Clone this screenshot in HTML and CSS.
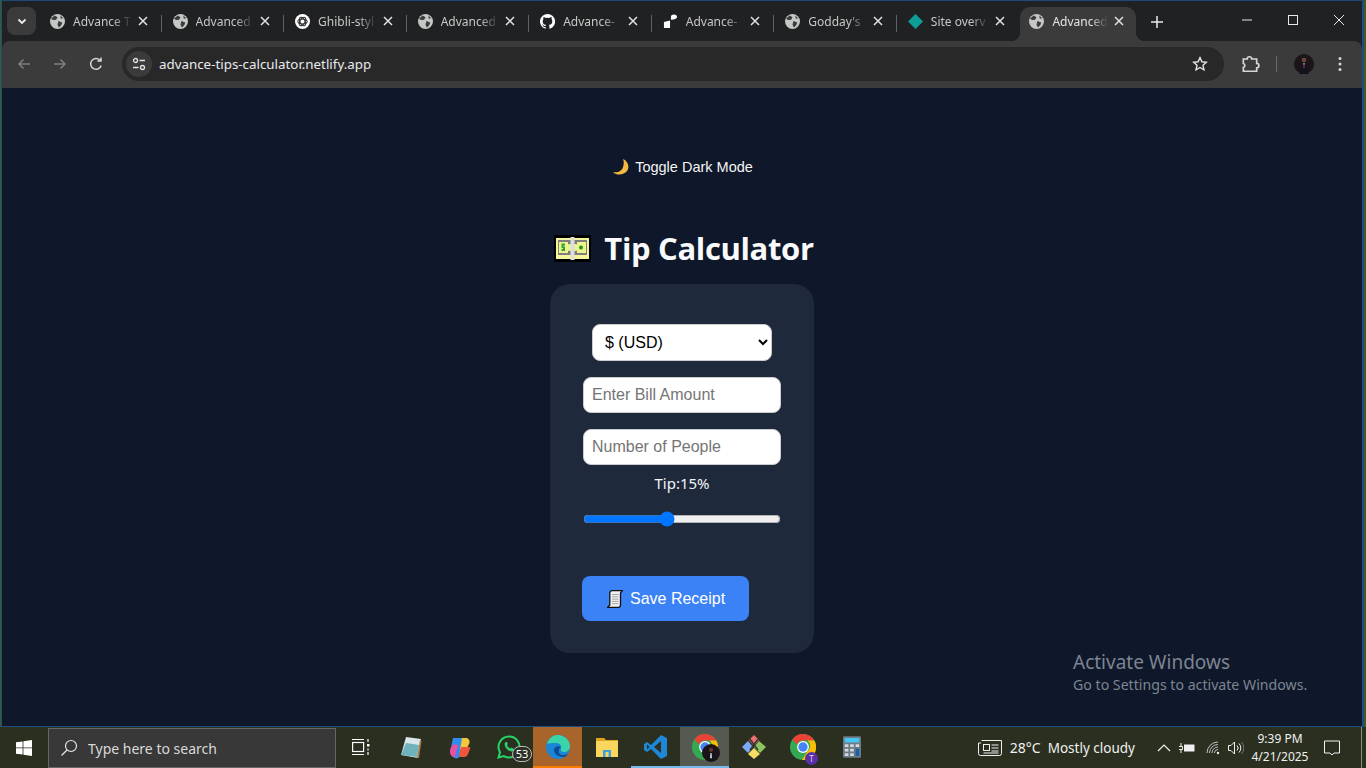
FILE: index.html
```html
<!DOCTYPE html>
<html lang="en">
<head>
    <meta charset="UTF-8">
    <title>Tip Calculator</title>
    <link rel="stylesheet" href="styles.css">
</head>
<body>
    <div class="window">
        <!-- tab strip -->
        <div class="tabstrip">
            <button class="tabsearch" type="button">
                <svg width="12" height="12" viewBox="0 0 12 12"><path d="M2.5 4.5 6 8l3.5-3.5" fill="none" stroke="#e8eaed" stroke-width="1.8"/></svg>
            </button>
            <div class="tabs">
                <div class="tab">
                    <svg class="fav" viewBox="0 0 16 16"><use href="#globe"/></svg>
                    <span class="tab-label">Advance T</span>
                    <svg class="tab-close" viewBox="0 0 10 10"><use href="#close"/></svg>
                </div>
                <div class="tab">
                    <svg class="fav" viewBox="0 0 16 16"><use href="#globe"/></svg>
                    <span class="tab-label">Advanced</span>
                    <svg class="tab-close" viewBox="0 0 10 10"><use href="#close"/></svg>
                </div>
                <div class="tab">
                    <svg class="fav" viewBox="0 0 16 16">
                        <circle cx="8" cy="8" r="8" fill="#fff"/>
                        <g fill="none" stroke="#333" stroke-width="1.1">
                            <ellipse cx="8" cy="8" rx="5" ry="2.6"/>
                            <ellipse cx="8" cy="8" rx="5" ry="2.6" transform="rotate(60 8 8)"/>
                            <ellipse cx="8" cy="8" rx="5" ry="2.6" transform="rotate(120 8 8)"/>
                        </g>
                    </svg>
                    <span class="tab-label">Ghibli-styl</span>
                    <svg class="tab-close" viewBox="0 0 10 10"><use href="#close"/></svg>
                </div>
                <div class="tab">
                    <svg class="fav" viewBox="0 0 16 16"><use href="#globe"/></svg>
                    <span class="tab-label">Advanced</span>
                    <svg class="tab-close" viewBox="0 0 10 10"><use href="#close"/></svg>
                </div>
                <div class="tab">
                    <svg class="fav" viewBox="0 0 16 16"><path fill="#fff" d="M8 0a8 8 0 0 0-2.53 15.59c.4.07.55-.17.55-.38v-1.34c-2.22.48-2.69-1.07-2.69-1.07-.36-.92-.89-1.17-.89-1.17-.73-.5.05-.49.05-.49.8.06 1.23.82 1.23.82.71 1.22 1.87.87 2.33.66.07-.52.28-.87.5-1.07-1.77-.2-3.64-.89-3.64-3.95 0-.87.31-1.59.82-2.15-.08-.2-.36-1.02.08-2.12 0 0 .67-.21 2.2.82a7.6 7.6 0 0 1 4 0c1.53-1.04 2.2-.82 2.2-.82.44 1.1.16 1.92.08 2.12.51.56.82 1.27.82 2.15 0 3.07-1.87 3.75-3.65 3.95.29.25.54.73.54 1.48v2.2c0 .21.15.46.55.38A8 8 0 0 0 8 0z"/></svg>
                    <span class="tab-label">Advance-</span>
                    <svg class="tab-close" viewBox="0 0 10 10"><use href="#close"/></svg>
                </div>
                <div class="tab">
                    <svg class="fav" viewBox="0 0 16 16"><path fill="#fff" d="M1 8.500 7.500 7v8H1zM8.500 6V2.500C8.500 1.500 10 .5 12 .5c1.500 0 3 1 3 2.500 0 2-2 3-6.500 3z"/></svg>
                    <span class="tab-label">Advance-</span>
                    <svg class="tab-close" viewBox="0 0 10 10"><use href="#close"/></svg>
                </div>
                <div class="tab">
                    <svg class="fav" viewBox="0 0 16 16"><use href="#globe"/></svg>
                    <span class="tab-label">Godday's</span>
                    <svg class="tab-close" viewBox="0 0 10 10"><use href="#close"/></svg>
                </div>
                <div class="tab">
                    <svg class="fav" viewBox="0 0 16 16"><path fill="#0e9e97" d="M8 0l8 8-8 8-8-8z"/></svg>
                    <span class="tab-label">Site overv</span>
                    <svg class="tab-close" viewBox="0 0 10 10"><use href="#close"/></svg>
                </div>
                <div class="tab tab-active">
                    <svg class="fav" viewBox="0 0 16 16"><use href="#globe"/></svg>
                    <span class="tab-label">Advanced</span>
                    <svg class="tab-close" viewBox="0 0 10 10"><use href="#close"/></svg>
                </div>
            </div>
            <span class="newtab">
                <svg width="12" height="12" viewBox="0 0 12 12"><path d="M6 0v12M0 6h12" stroke="#e8eaed" stroke-width="1.5"/></svg>
            </span>
            <div class="winctrl">
                <svg width="46" height="12" viewBox="0 0 46 12"><path d="M18 6h10" stroke="#e8e8e8"/></svg>
                <svg width="46" height="12" viewBox="0 0 46 12"><rect x="18.5" y="1.5" width="9" height="9" fill="none" stroke="#e8e8e8"/></svg>
                <svg width="46" height="12" viewBox="0 0 46 12"><path d="M18 1l10 10M28 1 18 11" stroke="#e8e8e8"/></svg>
            </div>
        </div>

        <!-- toolbar -->
        <div class="toolbar">
            <svg class="tool" viewBox="0 0 16 16"><path d="M14 8H3M7.5 3.5 3 8l4.5 4.5" fill="none" stroke="#7d7f81" stroke-width="1.5"/></svg>
            <svg class="tool" viewBox="0 0 16 16"><path d="M2 8h11M8.5 3.5 13 8l-4.500 4.500" fill="none" stroke="#7d7f81" stroke-width="1.5"/></svg>
            <svg class="tool" viewBox="0 0 16 16"><path d="M13.200 9.500A5.400 5.400 0 1 1 12 4.200M13 1.500v3.600H9.400" fill="none" stroke="#d5d7d9" stroke-width="1.500"/></svg>
            <div class="omnibox">
                <span class="siteinfo">
                    <svg width="16" height="16" viewBox="0 0 16 16" fill="none" stroke="#e3e3e3" stroke-width="1.300"><circle cx="4.500" cy="4.500" r="2"/><path d="M8.500 4.500H14M2 11.500h5.500"/><circle cx="11.500" cy="11.500" r="2"/></svg>
                </span>
                <span class="url">advance-tips-calculator.netlify.app</span>
                <svg class="star" viewBox="0 0 16 16"><path d="M8 1.600l1.900 4.200 4.500.5-3.400 3 1 4.500L8 11.500l-4 2.300 1-4.500-3.400-3 4.500-.5z" fill="none" stroke="#e3e3e3" stroke-width="1.400"/></svg>
            </div>
            <svg class="ext" viewBox="0 0 18 18"><path d="M3 4.500h3.500a2 2 0 0 1 4 0H15v4a2 2 0 0 1 0 4v3H3v-3.500a1.800 1.800 0 0 0 0-3.500z" fill="none" stroke="#d5d7d9" stroke-width="1.500"/></svg>
            <span class="toolsep"></span>
            <svg class="avatar" viewBox="0 0 20 20">
                <circle cx="10" cy="10" r="10" fill="#1c1418"/>
                <circle cx="10" cy="6" r="2.300" fill="#6b463a"/>
                <path d="M5.500 20v-7.500c0-2 2-3.500 4.500-3.500s4.500 1.500 4.500 3.500V20z" fill="#12131c"/>
                <path d="M9.200 9.200h1.600L10 12z" fill="#d8d8d8"/>
                <path d="M9.700 10.500h.6l.3 3-.6 1-.6-1z" fill="#a52a34"/>
            </svg>
            <svg class="dots" viewBox="0 0 4 16"><circle cx="2" cy="2.500" r="1.500" fill="#d5d7d9"/><circle cx="2" cy="8" r="1.500" fill="#d5d7d9"/><circle cx="2" cy="13.500" r="1.500" fill="#d5d7d9"/></svg>
        </div>

        <!-- the calculator page -->
        <main class="page">
            <button class="dark-toggle" type="button">
                <svg class="emoji-moon" viewBox="0 0 16 16"><path d="M10 0C15 2 17 8 14 12 11 16 4 17 0 13 5 14 9 12 10 8 11 5 11 2 10 0z" fill="#f4b93e"/></svg>
                Toggle Dark Mode
            </button>
            <h1 class="title">
                <svg class="emoji-money" viewBox="0 0 37 27">
                    <rect width="37" height="27" fill="#000"/>
                    <rect x="2" y="3" width="33" height="21" fill="#f5f59c"/>
                    <rect x="4" y="5" width="29" height="15" fill="#7f7f7f"/>
                    <rect x="5" y="7" width="9" height="11" fill="#ecf58e"/>
                    <rect x="23" y="7" width="9" height="11" fill="#ecf58e"/>
                    <circle cx="16" cy="12.500" r="3.500" fill="#ecf58e"/>
                    <circle cx="21" cy="12.500" r="3.500" fill="#ecf58e"/>
                    <rect x="16.500" y="2" width="4" height="23" fill="#dedede"/>
                    <path d="M7.500 8.500h3.500v2H9.500v1H11v4.500H7.500v-2H9v-1H7.500z" fill="#2aa82a"/>
                    <circle cx="27" cy="12.500" r="2" fill="#1f9a1f"/>
                </svg>
                Tip Calculator
            </h1>
            <section class="card">
                <select class="currency">
                    <option>$ (USD)</option>
                    <option>€ (EUR)</option>
                    <option>£ (GBP)</option>
                </select>
                <input class="field" type="number" placeholder="Enter Bill Amount">
                <input class="field" type="number" placeholder="Number of People">
                <p class="tip-label">Tip:15%</p>
                <input class="slider" type="range" min="0" max="36" value="15">
                <button class="save" type="button">
                    <svg class="emoji-scroll" viewBox="0 0 16 18">
                        <path d="M5 .7h10.300L13.500 3v12c0 1.300-1 2.300-2.200 2.300H.7L2.800 15V3C2.800 1.700 3.800.7 5 .7z" fill="#f1f1f1" stroke="#111" stroke-width="1.300"/>
                        <path d="M5 4.500h6.500M5 6.800h6.500M5 9.100h6.500M5 11.400h6.500M5 13.700h6.500" stroke="#a5a5a5"/>
                    </svg>
                    Save Receipt
                </button>
            </section>
            <div class="activate">
                <div class="activate-head">Activate Windows</div>
                <div>Go to Settings to activate Windows.</div>
            </div>
        </main>
    </div>

    <!-- windows taskbar -->
    <footer class="taskbar">
        <span class="start">
            <svg width="16" height="16" viewBox="0 0 16 16"><path fill="#fff" d="M0 2.300 6.600 1.400V7.500H0zM7.400 1.300 16 0v7.500H7.400zM0 8.300h6.600v6.300L0 13.700zM7.400 8.300H16V16l-8.600-1.300z"/></svg>
        </span>
        <div class="search">
            <svg width="18" height="18" viewBox="0 0 18 18"><circle cx="11" cy="7" r="5.500" fill="none" stroke="#e6e6e6" stroke-width="1.200"/><path d="M7 11 1.500 16.500" stroke="#e6e6e6" stroke-width="1.200"/></svg>
            <span>Type here to search</span>
        </div>
        <span class="app app-first">
            <svg width="18" height="18" viewBox="0 0 18 18" fill="none" stroke="#fff" stroke-width="1.200"><path d="M0 1.500h12M0 16.500h12"/><rect x=".6" y="4.500" width="11" height="9"/><path d="M16 1v3M16 14v3"/><rect x="15" y="6" width="2.500" height="2.500" fill="#fff" stroke="none"/><path d="M16 10.500v2"/></svg>
        </span>
        <span class="app">
            <svg width="24" height="24" viewBox="0 0 24 24"><path d="M7 2l15 2-3 19-17-3z" fill="#d9e6ea"/><path d="M7 8l13 2-2 12-16-2z" fill="#6fb3bd"/><path d="M21 5l1.500 1-2.500 17-2 0z" fill="#a5794a"/></svg>
        </span>
        <span class="app">
            <svg width="24" height="24" viewBox="0 0 24 24"><path d="M5 3h9c2 0 3 1 4 3l-6 15c-1 2-3 3-5 2-3-1-4-3-5-6z" fill="#2f8df0"/><path d="M14 3h4c2 0 4 2 3.500 5L18 15h-6z" fill="#f7c73b"/><path d="M2 17c0-4 2-7 5-8l3 1-3 12c-2 1-5-2-5-5z" fill="#e84fa0"/><path d="M11 20l2-8h8c1 0 1.500 1 1 2l-2 5c-.5 2-2 3-4 3h-4z" fill="#f0563c"/></svg>
        </span>
        <span class="app app-badged">
            <svg width="24" height="24" viewBox="0 0 24 24"><path d="M12 1.500a10.500 10.500 0 0 0-9 15.800L1.500 22.500l5.400-1.400A10.500 10.500 0 1 0 12 1.500z" fill="none" stroke="#25d366" stroke-width="2"/><path d="M8.500 7c-1.500 1.500-1 4 1 6.500s4.500 3.500 6.500 2.500l1-2-2.500-1.500-1 1c-1.500-.5-3-2-3.500-3.500l1-1L9.800 7z" fill="#25d366"/></svg>
            <span class="badge">53</span>
        </span>
        <span class="app app-edge">
            <svg width="26" height="26" viewBox="0 0 26 26"><circle cx="13" cy="13" r="12" fill="#1b86d8"/><path d="M2 10C4 3 9 1 13 1c6 0 12 5 12 11 0 4-3 6-6 6-2 0-4-1-3-3 1-3-1-6-5-6-4 0-7 0-9 1z" fill="#3bd3a8"/><path d="M9 16c0 4 4 7 9 7 2 0 4-1 5-3-3 1-8 2-9-1-1-2 0-5 2-6-3-2-7 0-7 3z" fill="#0d4c93"/></svg>
        </span>
        <span class="app">
            <svg width="22" height="20" viewBox="0 0 22 20"><path d="M0 1h8l2 2h12v3H0z" fill="#e0a422"/><rect y="4" width="22" height="16" fill="#f9d75f"/><path d="M7 13h8v7H7z" fill="#3f9fe0"/><rect x="9.500" y="15" width="3" height="5" fill="#f9d75f"/></svg>
        </span>
        <span class="app app-open">
            <svg width="24" height="24" viewBox="0 0 24 24"><path d="M17 0l6 3v18l-6 3L7 14l-4 3-3-2V9l3-2 4 3z" fill="#1e88d6"/><path d="M17 6v12l-7-6z" fill="#2b2f23"/><path d="M3 9.500v5L5.500 12z" fill="#2b2f23"/></svg>
        </span>
        <span class="app app-active">
            <svg width="26" height="26" viewBox="0 0 24 24"><use href="#chrome"/></svg>
            <svg class="app-avatar" viewBox="0 0 20 20"><circle cx="10" cy="10" r="10" fill="#1c1418"/><circle cx="10" cy="6.500" r="2.400" fill="#5a3a32"/><path d="M5.500 19v-6.500c0-2 2-3 4.500-3s4.500 1 4.500 3V19z" fill="#12131c"/><path d="M9.300 10h1.400l.3 5-1 1.500-1-1.500z" fill="#ddd"/></svg>
        </span>
        <span class="app">
            <svg width="26" height="26" viewBox="0 0 26 26"><path d="M13 1l5 5-5 6-5-6z" fill="#ee7070"/><path d="M18 7l7 6-6 6-6-6z" fill="#8ec45f"/><path d="M13 14l6 6-6 5-6-5z" fill="#f7dd63"/><path d="M7 7l5 6-5 6-6-6z" fill="#7daaf5"/><path d="M9 5l8 11M17 5 9 16" stroke="#333" stroke-width="1.300"/></svg>
        </span>
        <span class="app">
            <svg width="26" height="26" viewBox="0 0 24 24"><use href="#chrome"/></svg>
            <span class="app-dot">T</span>
        </span>
        <span class="app">
            <svg width="18" height="24" viewBox="0 0 20 24"><rect width="20" height="24" rx="1.500" fill="#6d7b87"/><rect x="2" y="2" width="16" height="5" fill="#45c8f0"/><g fill="#d5dbe0"><rect x="2" y="9" width="4" height="3"/><rect x="8" y="9" width="4" height="3"/><rect x="2" y="14" width="4" height="3"/><rect x="8" y="14" width="4" height="3"/><rect x="2" y="19" width="4" height="3"/><rect x="8" y="19" width="4" height="3"/></g><rect x="14" y="14" width="4" height="8" fill="#1b5fa8"/><rect x="14" y="9" width="4" height="3" fill="#d5dbe0"/></svg>
        </span>

        <div class="tray">
            <svg class="news" width="24" height="16" viewBox="0 0 24 16" fill="none" stroke="#f0f0f0"><path d="M3.500.5h20v13a2 2 0 0 1-2 2h-19a2 2 0 0 1-2-2V3h2.500"/><rect x="5.500" y="4.500" width="6" height="6"/><path d="M13.500 5h7M13.500 8h7M13.500 11h7M5.500 13h15"/></svg>
            <span class="temp">28°C</span>
            <span class="weather">Mostly cloudy</span>
            <svg class="chev" width="14" height="8" viewBox="0 0 14 8"><path d="M1 7l6-6 6 6" fill="none" stroke="#f0f0f0" stroke-width="1.200"/></svg>
            <svg class="batt" width="16" height="10" viewBox="0 0 16 10"><rect x="5" y="1.500" width="10.500" height="7" fill="#f0f0f0"/><path d="M0 3.500h3.500v3H0M2 0v3M2 7v3" fill="none" stroke="#f0f0f0"/></svg>
            <svg class="wifi" width="14" height="14" viewBox="0 0 14 14" fill="none" stroke="#bdbdbd"><path d="M1 12a11 11 0 0 1 11-11M3.500 12A8.500 8.500 0 0 1 12 3.500M6 12a6 6 0 0 1 6-6M8.500 12A3.500 3.500 0 0 1 12 8.500"/><circle cx="12" cy="12" r="1.200" fill="#f0f0f0" stroke="none"/></svg>
            <svg class="sound" width="16" height="14" viewBox="0 0 16 14" fill="none" stroke="#f0f0f0"><path d="M.5 4.500H3L6.500 1v12L3 9.500H.5z"/><path d="M9 4.500a3.500 3.500 0 0 1 0 5M11 2.500a6.500 6.500 0 0 1 0 9"/><path d="M13.500 1a9 9 0 0 1 0 12" stroke="#777"/></svg>
            <div class="clock">
                <div>9:39 PM</div>
                <div>4/21/2025</div>
            </div>
            <svg class="notif" width="16" height="16" viewBox="0 0 16 16"><path d="M.5 1h15v12H10l-2 2-2-2H.5z" fill="none" stroke="#f0f0f0"/></svg>
            <span class="showdesk"></span>
        </div>
    </footer>

    <!-- shared icons -->
    <svg class="defs" width="0" height="0">
        <defs>
            <g id="globe">
                <circle cx="8" cy="8" r="8" fill="#c4c7c5"/>
                <path d="M5 1.500 8 3.500 6.500 6 3.500 6.500 1 5zM9 7.500l4 1.500-1 3-2.500 2.500L8 11.500zM11 1.500l3 3-2.500.5z" fill="#3b3b3b"/>
            </g>
            <path id="close" d="M1 1l8 8M9 1 1 9" stroke="#e3e3e3" stroke-width="1.500" fill="none"/>
            <g id="chrome">
                <circle cx="12" cy="12" r="12" fill="#34a853"/>
                <path d="M12 0a12 12 0 0 1 10.400 6H12a6 6 0 0 0-5.600 3.800L2.300 5A12 12 0 0 1 12 0z" fill="#ea4335"/>
                <path d="M22.400 6A12 12 0 0 1 11 24l5.200-8.200A6 6 0 0 0 16 6z" fill="#fbbc04"/>
                <circle cx="12" cy="12" r="5.500" fill="#fff"/>
                <circle cx="12" cy="12" r="4.300" fill="#4285f4"/>
            </g>
        </defs>
    </svg>
</body>
</html>
```

FILE: styles.css
```css
* {
    box-sizing: border-box;
}
html, body {
    margin: 0;
    height: 768px;
    overflow: hidden;
}
body {
    background: #3f5a25;
    font-family: "Liberation Sans", Arial, sans-serif;
    display: flex;
    flex-direction: column;
}
button {
    font-family: inherit;
    cursor: pointer;
}
.defs {
    display: block;
    height: 0;
}

/* browser window */
.window {
    width: 1363px;
    height: 727px;
    margin-left: 1px;
    padding-top: 1px;
    background: #202122;
    border: 1px solid #1c4f80;
    border-right-width: 2px;
    border-top-color: #1c4a74;
    display: flex;
    flex-direction: column;
    flex-shrink: 0;
}
.tabstrip {
    height: 39px;
    flex-shrink: 0;
    display: flex;
    align-items: flex-end;
    background: #202122;
}
.tabsearch {
    width: 29px;
    height: 28px;
    margin: 0 3px 6px 5px;
    border: none;
    border-radius: 8px;
    background: #3b3b3b;
    display: flex;
    align-items: center;
    justify-content: center;
    padding: 0;
}
.tabs {
    display: flex;
    height: 34px;
}
.tab {
    width: 122.550px;
    height: 34px;
    padding: 0 11px 6px 11px;
    display: flex;
    align-items: center;
    position: relative;
    color: #c7c7c7;
    font: 12px "Noto Sans", sans-serif;
}
.tab::after {
    content: "";
    position: absolute;
    right: 0;
    top: 8px;
    height: 17px;
    width: 1px;
    background: #5f6368;
}
.tab:nth-child(8)::after {
    display: none;
}
.tab-active {
    width: 116px;
    margin-left: 1px;
    padding: 0 9px 6px 9px;
    background: #3b3b3b;
    border-radius: 10px 10px 0 0;
    color: #e3e3e3;
}
/* the little curves where the active tab meets the toolbar */
.tab-active::before, .tab-active::after {
    content: "";
    position: absolute;
    top: auto;
    bottom: 0;
    width: 9px;
    height: 9px;
}
.tab-active::before {
    left: -9px;
    background: radial-gradient(circle at 0 0, transparent 9px, #3b3b3b 9.500px);
}
.tab-active::after {
    right: -9px;
    background: radial-gradient(circle at 100% 0, transparent 9px, #3b3b3b 9.500px);
}
.fav {
    width: 15px;
    height: 15px;
    flex-shrink: 0;
    margin-right: 8px;
}
.tab-label {
    flex: 1;
    white-space: nowrap;
    overflow: hidden;
    -webkit-mask-image: linear-gradient(to right, #000 65%, transparent 95%);
    mask-image: linear-gradient(to right, #000 65%, transparent 95%);
}
.tab-close {
    width: 10px;
    height: 10px;
    margin: 0 3px;
    flex-shrink: 0;
}
.newtab {
    margin: 0 0 9px 15px;
    height: 20px;
    display: flex;
    align-items: center;
}
.winctrl {
    margin-left: auto;
    height: 39px;
    padding-bottom: 3px;
    display: flex;
    align-items: center;
}
.toolbar {
    height: 47px;
    flex-shrink: 0;
    display: flex;
    align-items: center;
    background: #3b3b3b;
    border-radius: 8px 8px 0 0;
    padding: 0 0 1px 14px;
}
.tool {
    width: 16px;
    height: 16px;
    margin-right: 20px;
    flex-shrink: 0;
}
.omnibox {
    width: 1102px;
    height: 34px;
    margin-left: -2px;
    border-radius: 17px;
    background: #282828;
    display: flex;
    align-items: center;
    padding: 0 16px 0 4px;
}
.siteinfo {
    width: 26px;
    height: 26px;
    border-radius: 13px;
    background: #3b3b3b;
    display: flex;
    align-items: center;
    justify-content: center;
}
.url {
    margin-left: 7px;
    flex: 1;
    color: #e8eaed;
    font: 13.350px "Noto Sans", sans-serif;
}
.star {
    width: 16px;
    height: 16px;
}
.ext {
    width: 20px;
    height: 20px;
    margin-left: 16px;
}
.toolsep {
    width: 1px;
    height: 16px;
    background: #6b6b6b;
    margin-left: 16px;
}
.avatar {
    width: 20px;
    height: 20px;
    margin-left: 17px;
}
.dots {
    width: 4px;
    height: 16px;
    margin-left: 24px;
}

/* calculator */
.page {
    flex: 1;
    background: #0f172a;
    color: #fff;
    position: relative;
    display: flex;
    flex-direction: column;
    align-items: center;
}
.dark-toggle {
    margin: 71px 0 0 2px;
    border: none;
    background: none;
    color: #f4f4f4;
    font-size: 14.500px;
    display: flex;
    align-items: center;
    gap: 6px;
    padding: 0;
}
.emoji-moon {
    width: 16px;
    height: 16px;
}
.title {
    margin: 53px 0 16px 4px;
    font: bold 31px/40px "Open Sans", "Noto Sans", sans-serif;
    letter-spacing: -0.350px;
    color: #f8fafc;
    display: flex;
    align-items: center;
    gap: 13px;
}
.emoji-money {
    width: 37px;
    height: 27px;
}
.card {
    width: 264px;
    height: 369px;
    padding: 40px 32px 32px;
    background: #1e293b;
    border-radius: 20px;
    text-align: center;
}
.currency {
    display: block;
    width: 180px;
    height: 37px;
    margin: 0 auto 16px;
    padding: 0 8px;
    border: 1px solid #ccc;
    border-radius: 8px;
    background: #fff;
    color: #000;
    font: 16px "Liberation Sans", sans-serif;
}
.field {
    display: block;
    width: 198px;
    height: 36px;
    margin: 0 auto 16px;
    padding: 0 8px;
    border: 1px solid #ccc;
    border-radius: 8px;
    background: #fff;
    font: 16px "Liberation Sans", sans-serif;
}
.field::placeholder {
    color: #757575;
}
.tip-label {
    margin: -9px 0 17px;
    font: 15px/22px "Noto Sans", sans-serif;
    color: #f1f5f9;
}
.slider {
    display: block;
    width: 198px;
    height: 16px;
    margin: 0 auto;
    accent-color: #0075ff;
}
.save {
    display: flex;
    align-items: center;
    gap: 7px;
    width: 167px;
    height: 45px;
    margin-top: 49px;
    padding: 0 0 0 25px;
    border: none;
    border-radius: 8px;
    background: #3b82f6;
    color: #fff;
    font-size: 16px;
}
.emoji-scroll {
    width: 16px;
    height: 18px;
}
.activate {
    position: absolute;
    left: 1071px;
    top: 561px;
    color: #7d8591;
    font: 14.150px/20px "Noto Sans", sans-serif;
    pointer-events: none;
}
.activate-head {
    font-size: 19px;
    line-height: 26px;
}

/* taskbar */
.taskbar {
    flex: 1;
    display: flex;
    align-items: stretch;
    background: #2a2f20;
    color: #f0f0f0;
    font: 14px "Noto Sans", sans-serif;
}
.start {
    width: 48px;
    display: flex;
    align-items: center;
    justify-content: center;
}
.search {
    width: 288px;
    margin-top: 1px;
    background: #383838;
    border: 1px solid #666;
    display: flex;
    align-items: center;
    gap: 10px;
    padding-left: 11px;
    color: #d8d8d8;
}
.app {
    width: 49px;
    display: flex;
    align-items: center;
    justify-content: center;
    position: relative;
    border-bottom: 2px solid transparent;
}
.app-first {
    width: 50px;
}
.app-edge {
    background: #a9642b;
    border-bottom-color: #f77c00;
}
.app-open {
    border-bottom-color: #76b9ed;
}
.app-active {
    background: #545a4f;
    border-bottom-color: #76b9ed;
}
.badge {
    position: absolute;
    right: 1px;
    bottom: 4px;
    width: 20px;
    height: 16px;
    border-radius: 8px;
    border: 1px solid #bbb;
    background: #2b2f26;
    font-size: 11px;
    line-height: 14px;
    text-align: center;
    color: #fff;
}
.app-avatar {
    position: absolute;
    left: 22px;
    top: 17px;
    width: 18px;
    height: 18px;
}
.app-dot {
    position: absolute;
    left: 27px;
    top: 25px;
    width: 13px;
    height: 13px;
    border-radius: 50%;
    background: #5b2fa8;
    color: #ddd;
    font-size: 8px;
    line-height: 13px;
    text-align: center;
}
.tray {
    margin-left: auto;
    display: flex;
    align-items: center;
}
.temp {
    margin-left: 8px;
}
.weather {
    margin-left: 7px;
    font-size: 13.500px;
}
.chev {
    margin-left: 22px;
}
.batt {
    margin-left: 8px;
}
.wifi {
    margin-left: 11px;
}
.sound {
    margin-left: 8px;
}
.clock {
    margin-left: 1px;
    width: 70px;
    text-align: center;
    font-size: 12px;
    line-height: 18px;
}
.notif {
    margin-left: 9px;
}
.showdesk {
    width: 5px;
    height: 100%;
    margin-left: 21px;
    border-left: 1px solid #8a8f80;
}
```
